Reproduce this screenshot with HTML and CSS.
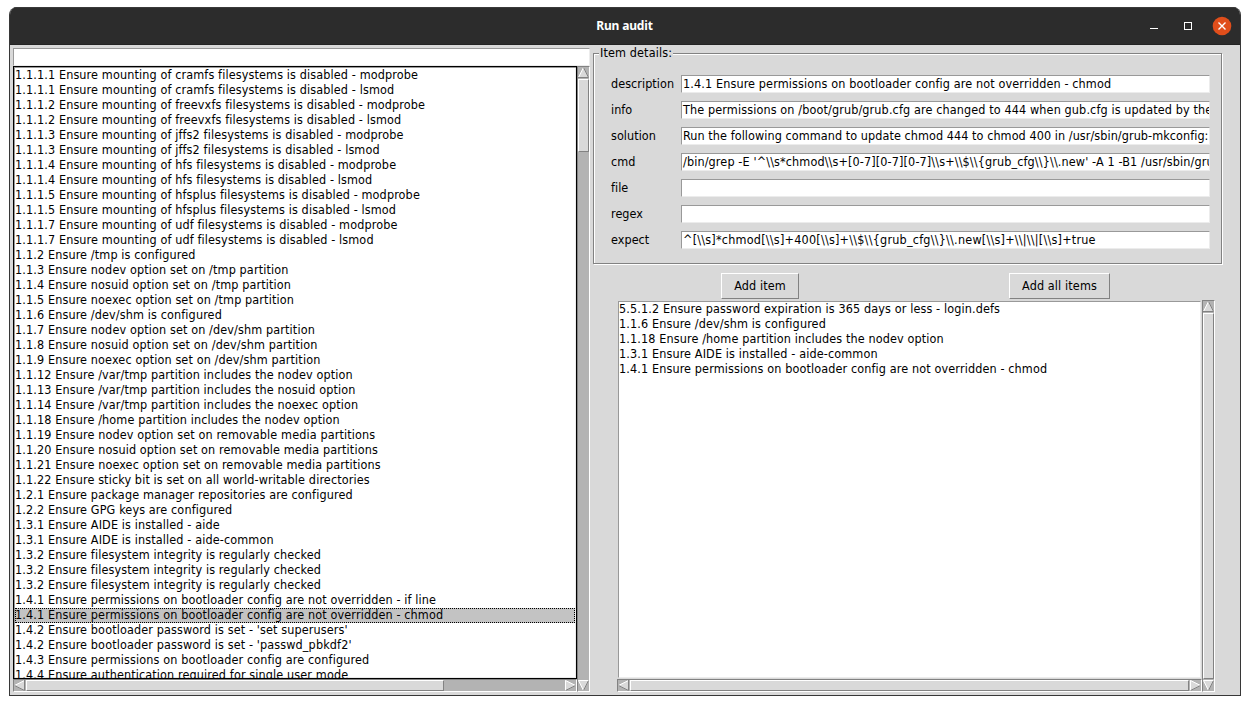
FILE: index.html
```html
<!DOCTYPE html>
<html lang="en">
<head>
<meta charset="utf-8">
<title>Run audit</title>
<link rel="stylesheet" href="styles.css">
</head>
<body>
<div class="window">
  <header class="titlebar">
    <h1 class="title">Run audit</h1>
    <div class="controls">
      <svg class="ctl" width="20" height="20" viewBox="0 0 20 20" shape-rendering="crispEdges"><rect x="6" y="12" width="8" height="1" fill="#fff"/></svg>
      <svg class="ctl" width="20" height="20" viewBox="0 0 20 20" shape-rendering="crispEdges"><rect x="6.5" y="6.5" width="7" height="7" fill="none" stroke="#fff"/></svg>
      <svg class="ctl" width="20" height="20" viewBox="0 0 20 20"><circle cx="10" cy="10" r="9.3" fill="#e04e1b"/><path d="M6.5 6.5l7 7M13.5 6.5l-7 7" stroke="#fff" stroke-width="1.4"/></svg>
    </div>
  </header>
  <main class="content">
    <section class="left">
      <div class="entry search"></div>
      <div class="scrollgrid left-grid">
        <ul class="listbox focused" id="items">
          <li>1.1.1.1 Ensure mounting of cramfs filesystems is disabled - modprobe</li>
          <li>1.1.1.1 Ensure mounting of cramfs filesystems is disabled - lsmod</li>
          <li>1.1.1.2 Ensure mounting of freevxfs filesystems is disabled - modprobe</li>
          <li>1.1.1.2 Ensure mounting of freevxfs filesystems is disabled - lsmod</li>
          <li>1.1.1.3 Ensure mounting of jffs2 filesystems is disabled - modprobe</li>
          <li>1.1.1.3 Ensure mounting of jffs2 filesystems is disabled - lsmod</li>
          <li>1.1.1.4 Ensure mounting of hfs filesystems is disabled - modprobe</li>
          <li>1.1.1.4 Ensure mounting of hfs filesystems is disabled - lsmod</li>
          <li>1.1.1.5 Ensure mounting of hfsplus filesystems is disabled - modprobe</li>
          <li>1.1.1.5 Ensure mounting of hfsplus filesystems is disabled - lsmod</li>
          <li>1.1.1.7 Ensure mounting of udf filesystems is disabled - modprobe</li>
          <li>1.1.1.7 Ensure mounting of udf filesystems is disabled - lsmod</li>
          <li>1.1.2 Ensure /tmp is configured</li>
          <li>1.1.3 Ensure nodev option set on /tmp partition</li>
          <li>1.1.4 Ensure nosuid option set on /tmp partition</li>
          <li>1.1.5 Ensure noexec option set on /tmp partition</li>
          <li>1.1.6 Ensure /dev/shm is configured</li>
          <li>1.1.7 Ensure nodev option set on /dev/shm partition</li>
          <li>1.1.8 Ensure nosuid option set on /dev/shm partition</li>
          <li>1.1.9 Ensure noexec option set on /dev/shm partition</li>
          <li>1.1.12 Ensure /var/tmp partition includes the nodev option</li>
          <li>1.1.13 Ensure /var/tmp partition includes the nosuid option</li>
          <li>1.1.14 Ensure /var/tmp partition includes the noexec option</li>
          <li>1.1.18 Ensure /home partition includes the nodev option</li>
          <li>1.1.19 Ensure nodev option set on removable media partitions</li>
          <li>1.1.20 Ensure nosuid option set on removable media partitions</li>
          <li>1.1.21 Ensure noexec option set on removable media partitions</li>
          <li>1.1.22 Ensure sticky bit is set on all world-writable directories</li>
          <li>1.2.1 Ensure package manager repositories are configured</li>
          <li>1.2.2 Ensure GPG keys are configured</li>
          <li>1.3.1 Ensure AIDE is installed - aide</li>
          <li>1.3.1 Ensure AIDE is installed - aide-common</li>
          <li>1.3.2 Ensure filesystem integrity is regularly checked</li>
          <li>1.3.2 Ensure filesystem integrity is regularly checked</li>
          <li>1.3.2 Ensure filesystem integrity is regularly checked</li>
          <li>1.4.1 Ensure permissions on bootloader config are not overridden - if line</li>
          <li class="selected">1.4.1 Ensure permissions on bootloader config are not overridden - chmod</li>
          <li>1.4.2 Ensure bootloader password is set - 'set superusers'</li>
          <li>1.4.2 Ensure bootloader password is set - 'passwd_pbkdf2'</li>
          <li>1.4.3 Ensure permissions on bootloader config are configured</li>
          <li>1.4.4 Ensure authentication required for single user mode</li>
        </ul>
        <div class="scroll vertical">
          <svg class="arrow" viewBox="0 0 11 11"><path d="M5.5 0L11 11H0z" fill="#d9d9d9"/><path d="M.5 10.5L5.5 .5" stroke="#fff"/><path d="M5.5 .5L10.5 10.5H0" fill="none" stroke="#828282"/></svg>
          <div class="trough"><div class="thumb thumb-items-v"></div></div>
          <svg class="arrow" viewBox="0 0 11 11"><path d="M0 0H11L5.5 11z" fill="#d9d9d9"/><path d="M11 .5H.5L5.5 10.5" fill="none" stroke="#fff"/><path d="M5.5 10.5L10.5 .5" stroke="#828282"/></svg>
        </div>
        <div class="scroll horizontal">
          <svg class="arrow" viewBox="0 0 11 11"><path d="M0 5.5L11 0V11z" fill="#d9d9d9"/><path d="M.5 5.5L10.5 .5" stroke="#fff"/><path d="M.5 5.5L10.5 10.5V0" fill="none" stroke="#828282"/></svg>
          <div class="trough"><div class="thumb thumb-items-h"></div></div>
          <svg class="arrow" viewBox="0 0 11 11"><path d="M0 0L11 5.5L0 11z" fill="#d9d9d9"/><path d="M.5 11V.5L10.5 5.5" fill="none" stroke="#fff"/><path d="M10.5 5.5L.5 10.5" stroke="#828282"/></svg>
        </div>
      </div>
    </section>
    <section class="right">
      <fieldset class="details">
        <legend>Item details:</legend>
        <div class="field"><label>description</label><div class="entry">1.4.1 Ensure permissions on bootloader config are not overridden - chmod</div></div>
        <div class="field"><label>info</label><div class="entry">The permissions on /boot/grub/grub.cfg are changed to 444 when gub.cfg is updated by the</div></div>
        <div class="field"><label>solution</label><div class="entry tight">Run the following command to update chmod 444 to chmod 400 in /usr/sbin/grub-mkconfig:</div></div>
        <div class="field"><label>cmd</label><div class="entry">/bin/grep -E '^\\s*chmod\\s+[0-7][0-7][0-7]\\s+\\$\\{grub_cfg\\}\\.new' -A 1 -B1 /usr/sbin/gru</div></div>
        <div class="field"><label>file</label><div class="entry"></div></div>
        <div class="field"><label>regex</label><div class="entry"></div></div>
        <div class="field"><label>expect</label><div class="entry pattern">^[\\s]*chmod[\\s]+400[\\s]+\\$\\{grub_cfg\\}\\.new[\\s]+\\|\\|[\\s]+true</div></div>
      </fieldset>
      <div class="buttons">
        <button class="btn add">Add item</button>
        <button class="btn add-all">Add all items</button>
      </div>
      <div class="scrollgrid right-grid">
        <ul class="listbox">
          <li>5.5.1.2 Ensure password expiration is 365 days or less - login.defs</li>
          <li>1.1.6 Ensure /dev/shm is configured</li>
          <li>1.1.18 Ensure /home partition includes the nodev option</li>
          <li>1.3.1 Ensure AIDE is installed - aide-common</li>
          <li>1.4.1 Ensure permissions on bootloader config are not overridden - chmod</li>
        </ul>
        <div class="scroll vertical">
          <svg class="arrow" viewBox="0 0 11 11"><path d="M5.5 0L11 11H0z" fill="#d9d9d9"/><path d="M.5 10.5L5.5 .5" stroke="#fff"/><path d="M5.5 .5L10.5 10.5H0" fill="none" stroke="#828282"/></svg>
          <div class="trough"><div class="thumb"></div></div>
          <svg class="arrow" viewBox="0 0 11 11"><path d="M0 0H11L5.5 11z" fill="#d9d9d9"/><path d="M11 .5H.5L5.5 10.5" fill="none" stroke="#fff"/><path d="M5.5 10.5L10.5 .5" stroke="#828282"/></svg>
        </div>
        <div class="scroll horizontal">
          <svg class="arrow" viewBox="0 0 11 11"><path d="M0 5.5L11 0V11z" fill="#d9d9d9"/><path d="M.5 5.5L10.5 .5" stroke="#fff"/><path d="M.5 5.5L10.5 10.5V0" fill="none" stroke="#828282"/></svg>
          <div class="trough"><div class="thumb"></div></div>
          <svg class="arrow" viewBox="0 0 11 11"><path d="M0 0L11 5.5L0 11z" fill="#d9d9d9"/><path d="M.5 11V.5L10.5 5.5" fill="none" stroke="#fff"/><path d="M10.5 5.5L.5 10.5" stroke="#828282"/></svg>
        </div>
      </div>
    </section>
  </main>
</div>
</body>
</html>
```
FILE: styles.css
```css
* { box-sizing: border-box; }

body {
  margin: 0;
  padding: 7px 9px 9px;
  height: 705px;
  overflow: hidden;
  background: #fff;
  color: #000;
  font: 12.5px/15px "DejaVu Sans Condensed", "DejaVu Sans", sans-serif;
  font-stretch: condensed;
  letter-spacing: 0.125px;
}

.window {
  display: flex;
  flex-direction: column;
  width: 1232px;
  height: 689px;
  border: 1px solid #373737;
  border-top: 0;
  border-radius: 8px 8px 0 0;
  background: #d9d9d9;
  overflow: hidden;
}

.titlebar {
  display: grid;
  grid-template-columns: 1fr auto 1fr;
  align-items: center;
  height: 38px;
  flex: none;
  background: #2c2c2c;
  border-top: 1px solid #3a3a3a;
  border-bottom: 1px solid #232323;
}

.title {
  grid-column: 2;
  margin: 0;
  padding-right: 1px;
  color: #fff;
  font: bold 12px/16px "Noto Sans", sans-serif;
  letter-spacing: -0.15px;
}

.controls {
  display: flex;
  justify-content: flex-end;
  gap: 14px;
  padding-right: 8px;
}

.ctl { display: block; }

.content {
  display: flex;
  flex: 1;
  padding-left: 3px;
}

.left { width: 577px; flex: none; padding-top: 3px; }

.entry {
  height: 18px;
  min-width: 0;
  border: 1px solid;
  border-color: #999 #ececec #ececec #999;
  background: #fff;
  overflow: hidden;
  white-space: nowrap;
}

.scrollgrid { display: grid; }

.left-grid {
  grid-template-columns: 564px 13px;
  grid-template-rows: 613px 13px;
}

.listbox {
  margin: 0;
  padding: 0;
  list-style: none;
  background: #fff;
  border: 1px solid;
  border-color: #999 #ececec #ececec #999;
  overflow: hidden;
  white-space: nowrap;
}

.listbox li { height: 15px; line-height: 13px; }

.listbox.focused {
  border-color: #000;
  box-shadow: inset 1px 1px #999, inset -1px -1px #ececec;
  padding: 1px;
}

.listbox .selected {
  background: #c3c3c3;
  outline: 1px dotted #000;
  outline-offset: -1px;
}

.scroll {
  display: flex;
  border: 1px solid;
  border-color: #828282 #fff #fff #828282;
  background: #b3b3b3;
}

.vertical {
  flex-direction: column;
  grid-column: 2;
  grid-row: 1 / 3;
}

.horizontal { grid-column: 1; grid-row: 2; }
.arrow { width: 11px; height: 11px; flex: none; display: block; }
.trough { flex: 1; padding: 1px 0; }
.horizontal .trough { padding: 0 1px; }

.thumb {
  width: 100%;
  height: 100%;
  background: #d9d9d9;
  border: 1px solid;
  border-color: #fff #828282 #828282 #fff;
}

.thumb-items-v { height: 73px; }
.thumb-items-h { width: 418px; }

.right { width: 630px; margin-left: 3px; }

.details {
  height: 220px;
  min-width: 0;
  margin: 0;
  padding: 10px 11px 0 16px;
  border: 2px groove #fff;
  border-color: #d9d9d9;
}

/* The sunken half of the frame is grey, the raised half white. */
.details {
  border: 1px solid #828282;
  box-shadow: inset 1px 1px #fff, 1px 1px #fff;
  width: 629px;
  height: 219px;
  padding: 10px 11px 0 17px;
}

.details legend {
  height: 16px;
  margin-left: -12px;
  padding: 0 1px;
  background: #d9d9d9;
}

.field { display: flex; height: 26px; align-items: center; }
.field label { width: 70px; flex: none; padding-bottom: 2px; letter-spacing: 0.05px; }
.field .entry { flex: 1; padding-left: 1px; }
.field .tight { letter-spacing: 0.07px; }
.field .pattern { letter-spacing: 0.22px; }

.buttons {
  display: flex;
  height: 36px;
  align-items: flex-start;
  padding: 9px 0 0 128px;
}

.btn {
  height: 26px;
  padding: 0 0 2px;
  border: 1px solid;
  border-color: #fff #828282 #828282 #fff;
  background: #d9d9d9;
  color: #000;
  font: inherit;
  letter-spacing: inherit;
}

.add { width: 78px; }
.add-all { width: 101px; margin-left: 210px; }

.right-grid {
  margin-left: 24px;
  grid-template-columns: 585px 13px;
  grid-template-rows: 379px 13px;
}

.right-grid .listbox { margin: 1px; }
```
